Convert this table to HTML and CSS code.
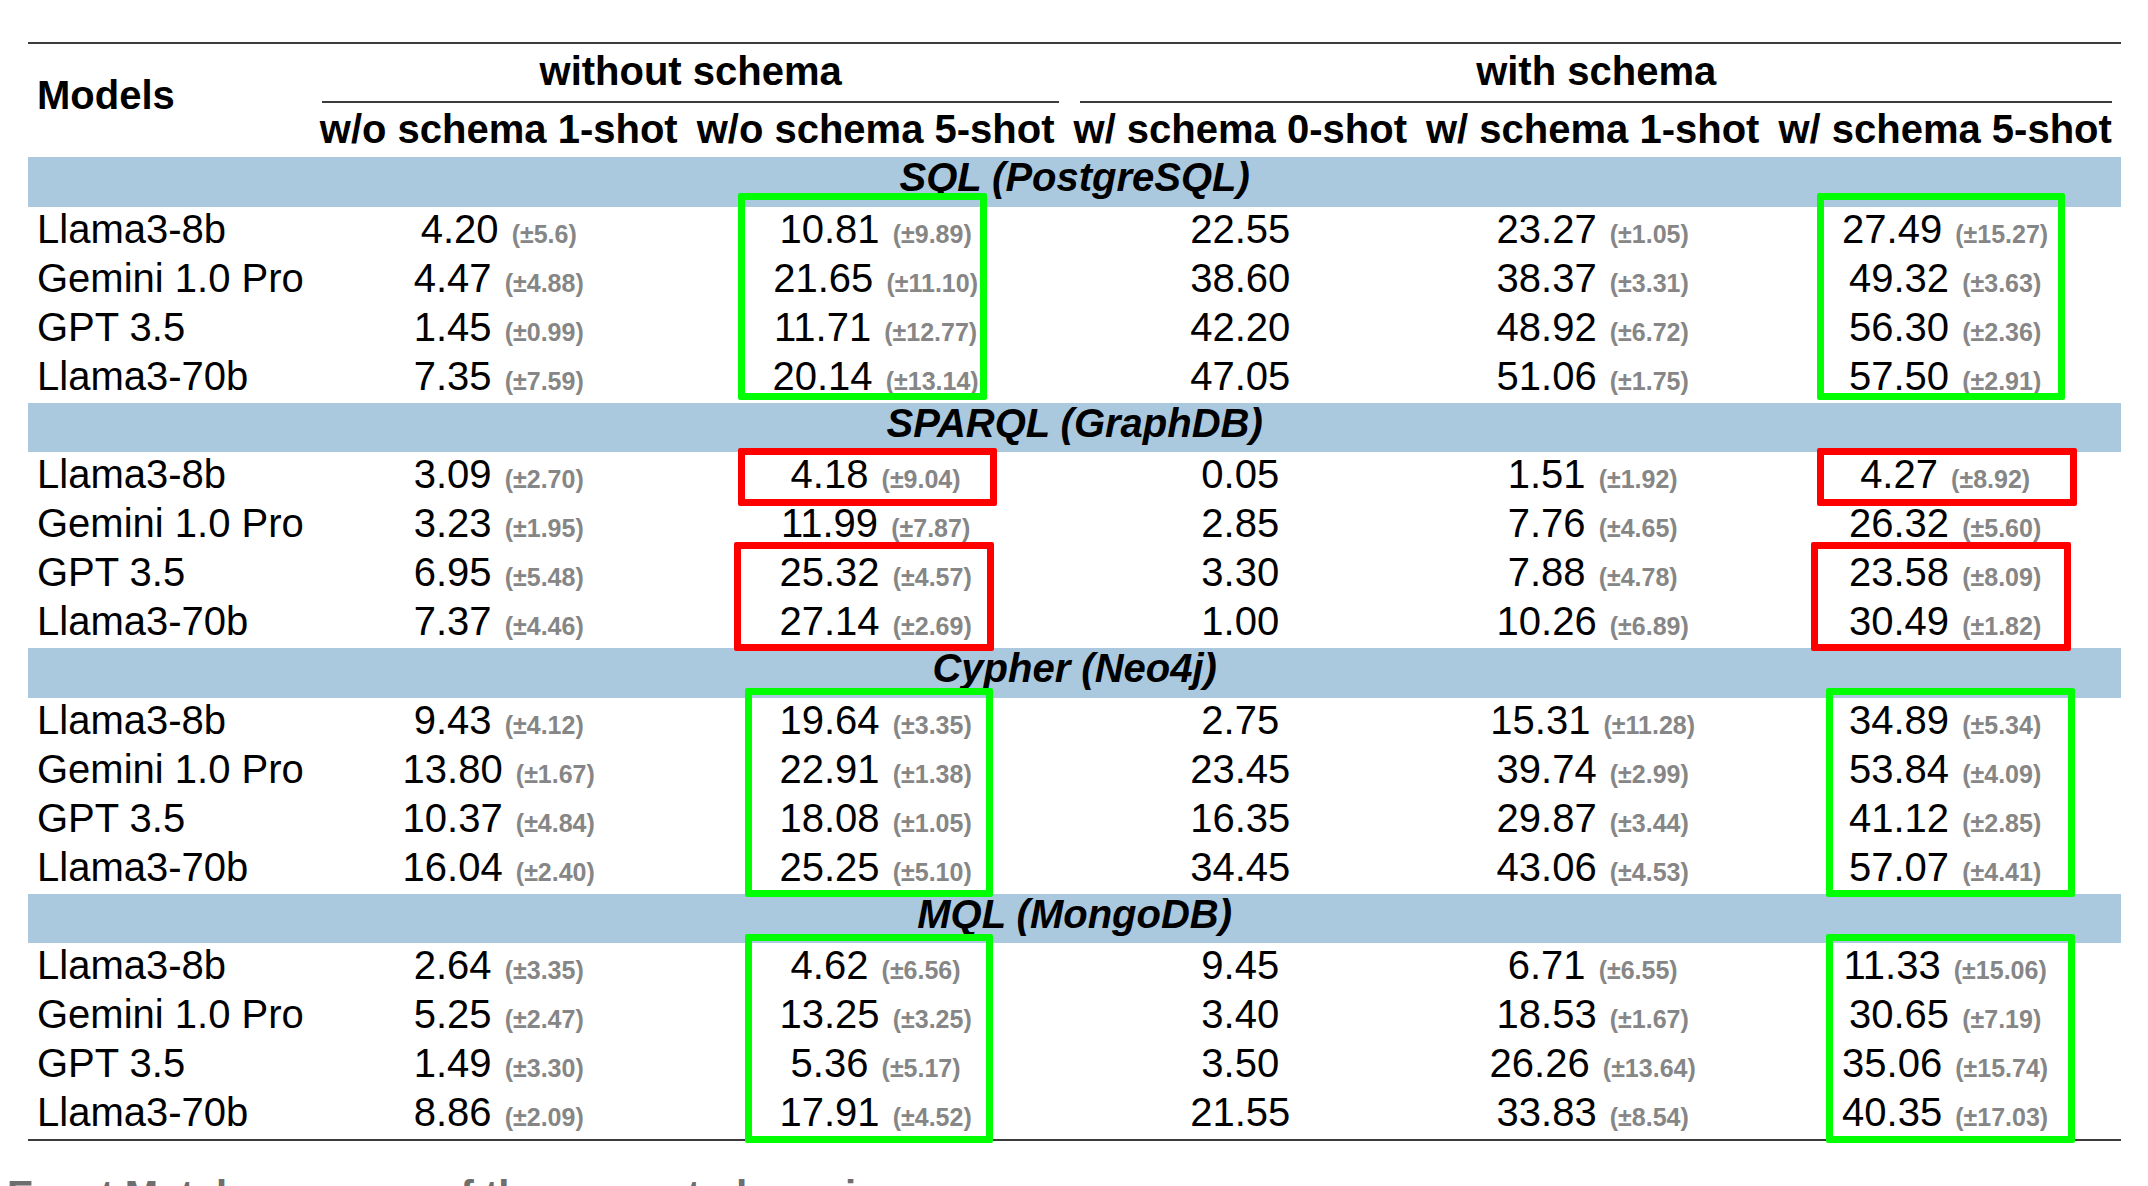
FILE: index.html
```html
<!DOCTYPE html>
<html lang="en">
<head>
<meta charset="utf-8">
<title>Query generation results</title>
<link rel="stylesheet" href="styles.css">
</head>
<body>
<div class="page">
  <table class="results">
    <thead>
      <tr class="group-row">
        <th class="model-head" rowspan="2">Models</th>
        <th class="group" colspan="2"><div class="group-label without">without schema</div></th>
        <th class="group" colspan="3"><div class="group-label with">with schema</div></th>
      </tr>
      <tr class="sub-row">
        <th>w/o schema 1-shot</th>
        <th>w/o schema 5-shot</th>
        <th>w/ schema 0-shot</th>
        <th>w/ schema 1-shot</th>
        <th>w/ schema 5-shot</th>
      </tr>
    </thead>
    <tbody>
      <tr class="section"><td colspan="6">SQL (PostgreSQL)</td></tr>
      <tr><td class="model">Llama3-8b</td><td>4.20 <span class="sd">(±5.6)</span></td><td>10.81 <span class="sd">(±9.89)</span></td><td>22.55</td><td>23.27 <span class="sd">(±1.05)</span></td><td>27.49 <span class="sd">(±15.27)</span></td></tr>
      <tr><td class="model">Gemini 1.0 Pro</td><td>4.47 <span class="sd">(±4.88)</span></td><td>21.65 <span class="sd">(±11.10)</span></td><td>38.60</td><td>38.37 <span class="sd">(±3.31)</span></td><td>49.32 <span class="sd">(±3.63)</span></td></tr>
      <tr><td class="model">GPT 3.5</td><td>1.45 <span class="sd">(±0.99)</span></td><td>11.71 <span class="sd">(±12.77)</span></td><td>42.20</td><td>48.92 <span class="sd">(±6.72)</span></td><td>56.30 <span class="sd">(±2.36)</span></td></tr>
      <tr><td class="model">Llama3-70b</td><td>7.35 <span class="sd">(±7.59)</span></td><td>20.14 <span class="sd">(±13.14)</span></td><td>47.05</td><td>51.06 <span class="sd">(±1.75)</span></td><td>57.50 <span class="sd">(±2.91)</span></td></tr>

      <tr class="section"><td colspan="6">SPARQL (GraphDB)</td></tr>
      <tr><td class="model">Llama3-8b</td><td>3.09 <span class="sd">(±2.70)</span></td><td>4.18 <span class="sd">(±9.04)</span></td><td>0.05</td><td>1.51 <span class="sd">(±1.92)</span></td><td>4.27 <span class="sd">(±8.92)</span></td></tr>
      <tr><td class="model">Gemini 1.0 Pro</td><td>3.23 <span class="sd">(±1.95)</span></td><td>11.99 <span class="sd">(±7.87)</span></td><td>2.85</td><td>7.76 <span class="sd">(±4.65)</span></td><td>26.32 <span class="sd">(±5.60)</span></td></tr>
      <tr><td class="model">GPT 3.5</td><td>6.95 <span class="sd">(±5.48)</span></td><td>25.32 <span class="sd">(±4.57)</span></td><td>3.30</td><td>7.88 <span class="sd">(±4.78)</span></td><td>23.58 <span class="sd">(±8.09)</span></td></tr>
      <tr><td class="model">Llama3-70b</td><td>7.37 <span class="sd">(±4.46)</span></td><td>27.14 <span class="sd">(±2.69)</span></td><td>1.00</td><td>10.26 <span class="sd">(±6.89)</span></td><td>30.49 <span class="sd">(±1.82)</span></td></tr>

      <tr class="section"><td colspan="6">Cypher (Neo4j)</td></tr>
      <tr><td class="model">Llama3-8b</td><td>9.43 <span class="sd">(±4.12)</span></td><td>19.64 <span class="sd">(±3.35)</span></td><td>2.75</td><td>15.31 <span class="sd">(±11.28)</span></td><td>34.89 <span class="sd">(±5.34)</span></td></tr>
      <tr><td class="model">Gemini 1.0 Pro</td><td>13.80 <span class="sd">(±1.67)</span></td><td>22.91 <span class="sd">(±1.38)</span></td><td>23.45</td><td>39.74 <span class="sd">(±2.99)</span></td><td>53.84 <span class="sd">(±4.09)</span></td></tr>
      <tr><td class="model">GPT 3.5</td><td>10.37 <span class="sd">(±4.84)</span></td><td>18.08 <span class="sd">(±1.05)</span></td><td>16.35</td><td>29.87 <span class="sd">(±3.44)</span></td><td>41.12 <span class="sd">(±2.85)</span></td></tr>
      <tr><td class="model">Llama3-70b</td><td>16.04 <span class="sd">(±2.40)</span></td><td>25.25 <span class="sd">(±5.10)</span></td><td>34.45</td><td>43.06 <span class="sd">(±4.53)</span></td><td>57.07 <span class="sd">(±4.41)</span></td></tr>

      <tr class="section"><td colspan="6">MQL (MongoDB)</td></tr>
      <tr><td class="model">Llama3-8b</td><td>2.64 <span class="sd">(±3.35)</span></td><td>4.62 <span class="sd">(±6.56)</span></td><td>9.45</td><td>6.71 <span class="sd">(±6.55)</span></td><td>11.33 <span class="sd">(±15.06)</span></td></tr>
      <tr><td class="model">Gemini 1.0 Pro</td><td>5.25 <span class="sd">(±2.47)</span></td><td>13.25 <span class="sd">(±3.25)</span></td><td>3.40</td><td>18.53 <span class="sd">(±1.67)</span></td><td>30.65 <span class="sd">(±7.19)</span></td></tr>
      <tr><td class="model">GPT 3.5</td><td>1.49 <span class="sd">(±3.30)</span></td><td>5.36 <span class="sd">(±5.17)</span></td><td>3.50</td><td>26.26 <span class="sd">(±13.64)</span></td><td>35.06 <span class="sd">(±15.74)</span></td></tr>
      <tr><td class="model">Llama3-70b</td><td>8.86 <span class="sd">(±2.09)</span></td><td>17.91 <span class="sd">(±4.52)</span></td><td>21.55</td><td>33.83 <span class="sd">(±8.54)</span></td><td>40.35 <span class="sd">(±17.03)</span></td></tr>
    </tbody>
  </table>

  <div class="annot good sql-a"></div>
  <div class="annot good sql-b"></div>
  <div class="annot bad sparql-a1"></div>
  <div class="annot bad sparql-b1"></div>
  <div class="annot bad sparql-a2"></div>
  <div class="annot bad sparql-b2"></div>
  <div class="annot good cypher-a"></div>
  <div class="annot good cypher-b"></div>
  <div class="annot good mql-a"></div>
  <div class="annot good mql-b"></div>

  <p class="caption">Exact Match accuracy of the generated queries</p>
</div>
</body>
</html>
```

FILE: styles.css
```css
html, body {
  margin: 0;
  padding: 0;
  background: #ffffff;
}

body {
  font-family: "Liberation Sans", Arial, Helvetica, sans-serif;
  color: #000000;
  overflow: hidden;
}

.page {
  position: relative;
  padding-top: 42px;
}

.results {
  margin-left: 28px;
  border-collapse: separate;
  border-spacing: 0;
  border-top: 2px solid #3c3c3c;
  border-bottom: 2px solid #3c3c3c;
  font-size: 40px;
}

.results th,
.results td {
  padding: 0 9.5px;
  white-space: nowrap;
  text-align: center;
}

.results th {
  font-weight: bold;
}

/* header */
.model-head {
  vertical-align: top;
  line-height: 45px;
  padding: 29px 6.5px 0 9px !important;
  text-align: left !important;
}

.group-row .group {
  padding: 5px 0 0 0;
  vertical-align: top;
}

.group-label {
  line-height: 45px;
  padding-bottom: 7px;
  border-bottom: 2px solid #3c3c3c;
}

.group-label.without {
  margin: 0 5px 0 12px;
}

.group-label.with {
  margin: 0 9px 0 16px;
}

.sub-row th {
  line-height: 45px;
  padding-top: 4px;
  padding-bottom: 5px;
}

/* section bands */
.section td {
  background: #aac9de;
  font-weight: bold;
  font-style: italic;
  line-height: 40px;
  padding-top: 0;
  padding-bottom: 9.5px;
}

/* data rows */
.results tbody tr:not(.section) td {
  line-height: 45px;
  padding-bottom: 4px;
}

.results td.model {
  text-align: left;
  padding-left: 9px;
  padding-right: 6.5px;
}

.sd {
  font-size: 25px;
  font-weight: bold;
  color: #868686;
  line-height: 1;
  margin-left: 2px;
}

/* highlight boxes drawn over the table */
.annot {
  position: absolute;
  box-sizing: border-box;
  border: 7px solid;
  border-radius: 2px;
}

.annot.good { border-color: #00ff00; }
.annot.bad { border-color: #ff0000; }

.sql-a { left: 738px; top: 193px; width: 249px; height: 207px; }
.sql-b { left: 1817px; top: 193px; width: 248px; height: 207px; }

.sparql-a1 { left: 738px; top: 448px; width: 259px; height: 58px; }
.sparql-b1 { left: 1817px; top: 448px; width: 260px; height: 58px; }
.sparql-a2 { left: 734px; top: 542px; width: 260px; height: 109px; }
.sparql-b2 { left: 1811px; top: 542px; width: 260px; height: 109px; }

.cypher-a { left: 745px; top: 688px; width: 248px; height: 209px; }
.cypher-b { left: 1826px; top: 688px; width: 249px; height: 209px; }

.mql-a { left: 745px; top: 934px; width: 248px; height: 209px; }
.mql-b { left: 1826px; top: 934px; width: 249px; height: 209px; }

.caption {
  margin: 32px 0 0 7px;
  font-size: 40px;
  line-height: 45px;
  font-weight: bold;
  color: #6e6e6e;
}
```
